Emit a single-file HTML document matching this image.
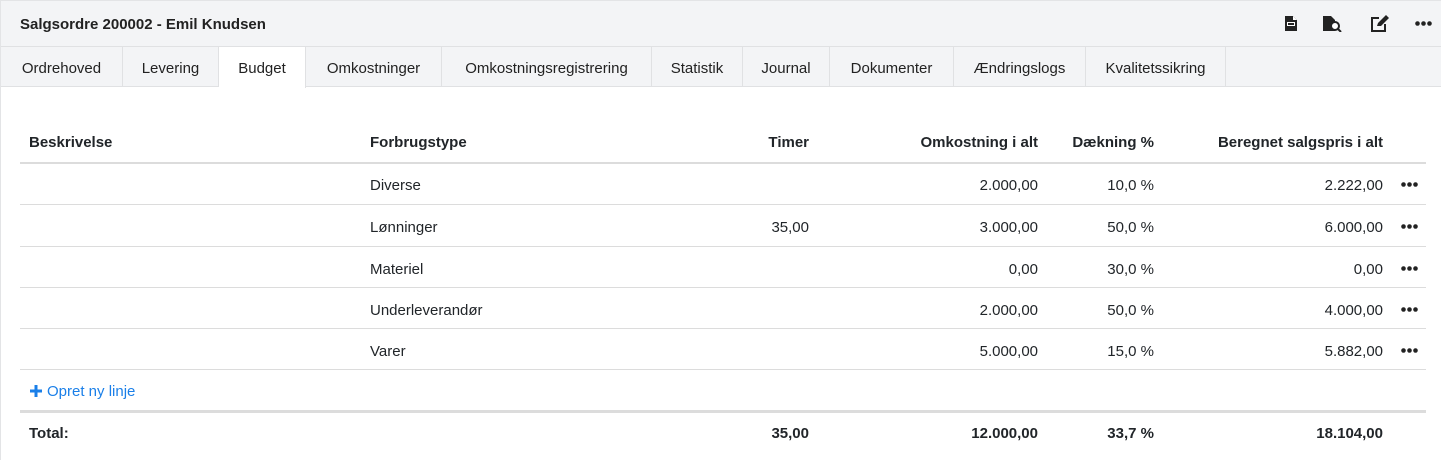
<!DOCTYPE html>
<html><head><meta charset="utf-8"><style>
*{margin:0;padding:0;box-sizing:border-box}
body{width:1441px;height:460px;background:#fff;font-family:"Liberation Sans",sans-serif;color:#212529;font-size:15px;position:relative;overflow:hidden;border-left:1px solid #e3e4e6}
.hdr{position:absolute;left:0;top:0;width:1441px;height:47px;background:#f3f4f6;border-top:1px solid #e3e4e6;border-bottom:1px solid #e0e1e3}
.title{position:absolute;left:19px;top:15px;font-size:15px;font-weight:bold;color:#222}
.tabs{position:absolute;left:0;top:47px;width:1441px;height:40px;background:#f3f4f6;border-bottom:1px solid #e0e1e3}
.tab{position:absolute;top:0;height:40px;line-height:43px;text-align:center;border-right:1px solid #e0e1e3;font-size:15px;color:#222}
.tab.a{background:#fff;height:41px}
.t{position:absolute;white-space:nowrap}
.r{text-align:right}
.b{font-weight:bold}
.line{position:absolute;left:19px;width:1406px;height:2px;background:#dcdcdc}
.dots{position:absolute;left:1400px;width:17px;height:5px}
</style></head><body>
<svg width="0" height="0" style="position:absolute"><defs><symbol id="d" viewBox="0 0 17 5"><circle cx="2.5" cy="2.5" r="2.3" fill="#222"/><circle cx="8.5" cy="2.5" r="2.3" fill="#222"/><circle cx="14.5" cy="2.5" r="2.3" fill="#222"/></symbol></defs></svg>
<div class="hdr"><div class="title">Salgsordre 200002 - Emil Knudsen</div>
<svg style="position:absolute;left:1283px;top:14px" width="14" height="17" viewBox="0 0 14 17"><path d="M1 1h8l4 4v11H1z" fill="#222"/><rect x="3" y="7" width="8" height="4" fill="#fff"/><rect x="4" y="8" width="6" height="2" fill="#222"/><path d="M9 1v4h4" fill="#fff"/></svg>
<svg style="position:absolute;left:1321px;top:14px" width="22" height="17" viewBox="0 0 22 17"><path d="M1 1h8l4 4v11H1z" fill="#222"/><circle cx="13" cy="11" r="4" fill="#fff" stroke="#222" stroke-width="2"/><path d="M16 14l3 3" stroke="#222" stroke-width="2"/></svg>
<svg style="position:absolute;left:1369px;top:14px" width="19" height="17" viewBox="0 0 19 17"><path d="M9 3H2v13h13V9" fill="none" stroke="#222" stroke-width="2"/><path d="M7 11l1-3 8-8 3 3-8 8z" fill="#222"/></svg>
<svg style="position:absolute;left:1414px;top:20px" width="17" height="5"><use href="#d"/></svg>
</div>
<div class="tabs">
<div class="tab" style="left:0;width:122px">Ordrehoved</div>
<div class="tab" style="left:122px;width:96px">Levering</div>
<div class="tab a" style="left:218px;width:87px">Budget</div>
<div class="tab" style="left:305px;width:136px">Omkostninger</div>
<div class="tab" style="left:441px;width:210px">Omkostningsregistrering</div>
<div class="tab" style="left:651px;width:91px">Statistik</div>
<div class="tab" style="left:742px;width:87px">Journal</div>
<div class="tab" style="left:829px;width:124px">Dokumenter</div>
<div class="tab" style="left:953px;width:132px">Ændringslogs</div>
<div class="tab" style="left:1085px;width:140px">Kvalitetssikring</div>
</div>

<div class="t b" style="left:28px;top:134px">Beskrivelse</div>
<div class="t b" style="left:369px;top:134px">Forbrugstype</div>
<div class="t b r" style="right:632px;top:134px">Timer</div>
<div class="t b r" style="right:403px;top:134px">Omkostning i alt</div>
<div class="t b r" style="right:287px;top:134px">Dækning %</div>
<div class="t b r" style="right:58px;top:134px">Beregnet salgspris i alt</div>
<div class="line" style="top:162px"></div>

<div class="t" style="left:369px;top:177px">Diverse</div>
<div class="t r" style="right:403px;top:177px">2.000,00</div>
<div class="t r" style="right:287px;top:177px">10,0 %</div>
<div class="t r" style="right:58px;top:177px">2.222,00</div>
<svg class="dots" style="top:182px"><use href="#d"/></svg>
<div class="line" style="top:204px;height:1px"></div>

<div class="t" style="left:369px;top:219px">Lønninger</div>
<div class="t r" style="right:632px;top:219px">35,00</div>
<div class="t r" style="right:403px;top:219px">3.000,00</div>
<div class="t r" style="right:287px;top:219px">50,0 %</div>
<div class="t r" style="right:58px;top:219px">6.000,00</div>
<svg class="dots" style="top:224px"><use href="#d"/></svg>
<div class="line" style="top:246px;height:1px"></div>

<div class="t" style="left:369px;top:261px">Materiel</div>
<div class="t r" style="right:403px;top:261px">0,00</div>
<div class="t r" style="right:287px;top:261px">30,0 %</div>
<div class="t r" style="right:58px;top:261px">0,00</div>
<svg class="dots" style="top:266px"><use href="#d"/></svg>
<div class="line" style="top:287px;height:1px"></div>

<div class="t" style="left:369px;top:302px">Underleverandør</div>
<div class="t r" style="right:403px;top:302px">2.000,00</div>
<div class="t r" style="right:287px;top:302px">50,0 %</div>
<div class="t r" style="right:58px;top:302px">4.000,00</div>
<svg class="dots" style="top:307px"><use href="#d"/></svg>
<div class="line" style="top:328px;height:1px"></div>

<div class="t" style="left:369px;top:343px">Varer</div>
<div class="t r" style="right:403px;top:343px">5.000,00</div>
<div class="t r" style="right:287px;top:343px">15,0 %</div>
<div class="t r" style="right:58px;top:343px">5.882,00</div>
<svg class="dots" style="top:348px"><use href="#d"/></svg>
<div class="line" style="top:369px;height:1px"></div>

<svg style="position:absolute;left:28px;top:384px" width="14" height="14" viewBox="0 0 14 14"><path d="M7 1v12M1 7h12" stroke="#1a7fe8" stroke-width="3"/></svg>
<div class="t" style="left:46px;top:383px;color:#1a7fe8">Opret ny linje</div>
<div class="line" style="top:410px;height:3px"></div>

<div class="t b" style="left:28px;top:425px">Total:</div>
<div class="t b r" style="right:632px;top:425px">35,00</div>
<div class="t b r" style="right:403px;top:425px">12.000,00</div>
<div class="t b r" style="right:287px;top:425px">33,7 %</div>
<div class="t b r" style="right:58px;top:425px">18.104,00</div>
</body></html>
